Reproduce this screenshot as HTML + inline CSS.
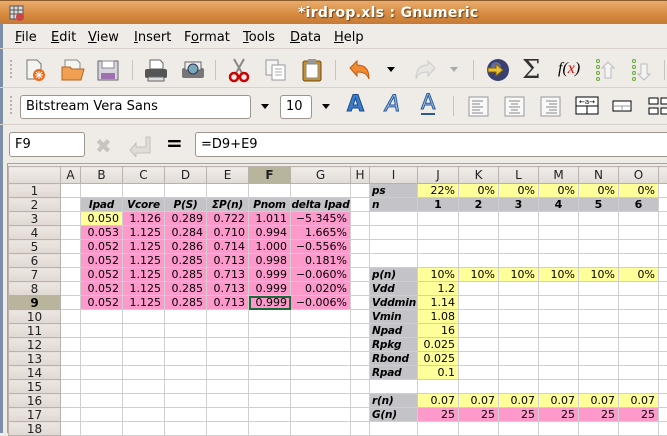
<!DOCTYPE html>
<html><head><meta charset="utf-8"><style>
*{margin:0;padding:0;box-sizing:border-box}
body{width:667px;height:433px;overflow:hidden;background:#efebe7;font-family:"DejaVu Sans","Liberation Sans",sans-serif;position:relative}
.a{position:absolute}
#title{left:0;top:0;width:667px;height:24px;background:linear-gradient(#e9ac6c,#d6893f 60%,#c67a36);border-top:1px solid #8a5a2a}
#title .t{position:absolute;left:298px;top:4px;color:#fff;font-weight:bold;font-size:14px;text-shadow:1px 1px 1px #6a3e10;letter-spacing:0.3px}
#menu{left:0;top:24px;width:667px;height:25px;font-size:13px;color:#000;border-bottom:1px solid #d8d2ca}
#menu span{position:absolute;top:6px}
.tb{left:0;width:667px;border-bottom:1px solid #d8d2ca}
.grip{position:absolute;left:10px;width:4px;border-left:2px dotted #b8b2a8}
.sep{position:absolute;width:1px;background:#c8c2b8}
.box{position:absolute;background:#fff;border:1px solid #9c968c;border-radius:3px;font-size:13px;padding-left:5px}
table{position:absolute;left:8px;top:166px;width:670px;border-collapse:collapse;table-layout:fixed;font-size:11px}
td{height:14px;border:1px solid #cfcfcf;padding:0 3px;text-align:right;white-space:nowrap;overflow:hidden;line-height:12px;background:#fff}
tr.h td{height:17px;background:linear-gradient(#f0ece8,#e2dcd6);border:1px solid #b8b2aa;text-align:center;font-size:12px;color:#222}
td.r{background:linear-gradient(#ece6e2,#e0d8d2);border:1px solid #b8b2aa;text-align:center;font-size:12px;color:#222}
td.sel{background:#b9b49c!important;font-weight:bold;color:#000}
.p{background:#fe99cc}.y{background:#ffff99}.g{background:#c3c3c8;font-weight:bold;font-style:italic;text-align:left;padding:0 1px 0 2px;font-size:10.5px;letter-spacing:-0.2px}
.gc{background:#c3c3c8;font-weight:bold;font-style:italic;text-align:center;padding:0;font-size:10.5px;letter-spacing:-0.2px}
.gb{background:#c3c3c8;font-weight:bold;text-align:center}
</style></head><body>
<div class="a" style="left:0;top:0;width:3px;height:433px;background:#7c8ea8"></div>
<div id="title" class="a"><svg class="a" style="left:9px;top:4px" width="16" height="16"><rect x="1" y="1" width="13" height="13" fill="#ddd" stroke="#555"/><path d="M1 5h13M1 9h13M5 1v13M9 1v13" stroke="#555"/><circle cx="11" cy="12" r="4" fill="#c44"/></svg><span class="t">*irdrop.xls : Gnumeric</span></div>
<div id="menu" class="a">
<span style="left:15px"><u>F</u>ile</span><span style="left:51px"><u>E</u>dit</span><span style="left:88px"><u>V</u>iew</span><span style="left:134px"><u>I</u>nsert</span><span style="left:184px">F<u>o</u>rmat</span><span style="left:243px"><u>T</u>ools</span><span style="left:290px"><u>D</u>ata</span><span style="left:334px"><u>H</u>elp</span></div>
<div class="a tb" style="top:50px;height:38px">
<div class="grip" style="top:10px;height:18px"></div>
<svg class="a" style="left:24px;top:8px" width="24" height="24"><path d="M3 2h10l4 4v15H3z" fill="#f4f4f0" stroke="#777"/><circle cx="15" cy="17" r="6" fill="#ec6a1a"/><path d="M15 13v8M11 17h8M12 14l6 6M18 14l-6 6" stroke="#fff" stroke-width="1"/></svg>
<svg class="a" style="left:60px;top:8px" width="26" height="24"><path d="M5 2h12l3 3v10H5z" fill="#f4f4f0" stroke="#888"/><path d="M2 9h8l2 2h12l-3 11H2z" fill="#f0a050" stroke="#b06820"/></svg>
<svg class="a" style="left:96px;top:8px" width="24" height="24"><rect x="2" y="3" width="20" height="19" fill="#d8d4e0" stroke="#666"/><rect x="6" y="3" width="12" height="7" fill="#fff" stroke="#888"/><rect x="5" y="15" width="14" height="6" fill="#a070b0"/></svg>
<div class="sep" style="left:132px;top:10px;height:20px"></div>
<svg class="a" style="left:143px;top:7px" width="26" height="26"><path d="M7 3h10l3 3v6H7z" fill="#fff" stroke="#666"/><rect x="2" y="12" width="22" height="9" fill="#555" rx="2"/><rect x="5" y="20" width="16" height="4" fill="#ddd" stroke="#666"/></svg>
<svg class="a" style="left:180px;top:7px" width="26" height="26"><rect x="2" y="11" width="22" height="10" fill="#777" rx="2"/><rect x="5" y="5" width="16" height="8" fill="#eee" stroke="#666"/><circle cx="13" cy="12" r="5" fill="#7ab" stroke="#335"/></svg>
<div class="sep" style="left:215px;top:10px;height:20px"></div>
<svg class="a" style="left:227px;top:7px" width="24" height="26"><path d="M7 2l8 14M17 2l-8 14" stroke="#888" stroke-width="2"/><circle cx="7" cy="20" r="4" fill="none" stroke="#c00" stroke-width="2.5"/><circle cx="17" cy="20" r="4" fill="none" stroke="#c00" stroke-width="2.5"/></svg>
<svg class="a" style="left:264px;top:8px" width="24" height="24"><rect x="2" y="2" width="12" height="15" fill="#f4f4f4" stroke="#999"/><rect x="8" y="7" width="13" height="15" fill="#fff" stroke="#999"/><path d="M11 11h7M11 14h7M11 17h7" stroke="#aaa"/></svg>
<svg class="a" style="left:300px;top:7px" width="24" height="26"><rect x="3" y="4" width="18" height="20" fill="#c89030" stroke="#6a4a10" rx="2"/><rect x="6" y="7" width="12" height="14" fill="#fff" stroke="#888"/><rect x="8" y="2" width="8" height="4" fill="#999"/></svg>
<div class="sep" style="left:335px;top:10px;height:20px"></div>
<svg class="a" style="left:347px;top:9px" width="26" height="22"><path d="M3 9l7-7v4c8 0 12 4 12 14c-2-5-5-7-12-7v4z" fill="#f08a30" stroke="#c05a10"/></svg>
<div class="a" style="left:387px;top:17px;border:4px solid transparent;border-top:5px solid #000"></div>
<svg class="a" style="left:412px;top:9px" width="26" height="22"><path d="M23 9l-7-7v4C8 6 4 10 4 20c2-5 5-7 12-7v4z" fill="#e8e6e2" stroke="#ccc"/></svg>
<div class="a" style="left:450px;top:17px;border:4px solid transparent;border-top:5px solid #aaa"></div>
<div class="sep" style="left:473px;top:10px;height:20px"></div>
<svg class="a" style="left:486px;top:8px" width="26" height="26"><circle cx="12" cy="12" r="11" fill="#3a4070"/><circle cx="10" cy="9" r="5" fill="#8090c0" opacity=".6"/><path d="M2 10h8v-4l7 6-7 6v-4H2z" fill="#e8c030" stroke="#806010"/></svg>
<div class="a" style="left:522px;top:5px;font-size:26px;color:#333;font-family:'DejaVu Serif',serif">Σ</div>
<div class="a" style="left:558px;top:10px;font-size:16px;font-style:italic;font-family:'Liberation Serif',serif">f(<span style="color:#d00">x</span>)</div>
<svg class="a" style="left:595px;top:8px" width="22" height="24"><g fill="none" stroke="#6a3"><circle cx="3" cy="3" r="1.5"/><circle cx="3" cy="9" r="1.5"/><circle cx="3" cy="15" r="1.5"/><circle cx="3" cy="21" r="1.5"/></g><path d="M13 4l6 6h-3v10h-6V10H7z" fill="#f4f4f4" stroke="#bbb"/></svg>
<svg class="a" style="left:631px;top:8px" width="22" height="24"><g fill="none" stroke="#6a3"><circle cx="3" cy="3" r="1.5"/><circle cx="3" cy="9" r="1.5"/><circle cx="3" cy="15" r="1.5"/><circle cx="3" cy="21" r="1.5"/></g><path d="M13 22l6-6h-3V6h-6v10H7z" fill="#f4f4f4" stroke="#bbb"/></svg>
<div class="sep" style="left:664px;top:10px;height:20px"></div>
</div>
<div class="a tb" style="top:88px;height:37px">
<div class="grip" style="top:8px;height:18px"></div>
<div class="box" style="left:20px;top:7px;width:231px;height:24px;line-height:22px">Bitstream Vera Sans</div>
<div class="a" style="left:261px;top:16px;border:4px solid transparent;border-top:5px solid #000"></div>
<div class="box" style="left:280px;top:7px;width:32px;height:24px;line-height:22px">10</div>
<div class="a" style="left:322px;top:16px;border:4px solid transparent;border-top:5px solid #000"></div>
<div class="a" style="left:347px;top:4px;font-size:22px;font-weight:bold;color:#3a7cc8;-webkit-text-stroke:1px #1a4a8a">A</div>
<div class="a" style="left:385px;top:4px;font-size:22px;font-style:italic;color:#9cc0ea;-webkit-text-stroke:1px #2a5a9a">A</div>
<div class="a" style="left:421px;top:3px;font-size:21px;color:#9cc0ea;-webkit-text-stroke:1px #2a5a9a;border-bottom:2px solid #2a5a9a;line-height:22px">A</div>
<div class="sep" style="left:453px;top:8px;height:20px"></div>
<svg class="a" style="left:468px;top:8px" width="22" height="22"><rect x="1" y="1" width="19" height="19" fill="#f8f8f8" stroke="#999"/><path d="M4 5h11M4 8h8M4 11h11M4 14h8M4 17h11" stroke="#888"/></svg>
<svg class="a" style="left:504px;top:8px" width="22" height="22"><rect x="1" y="1" width="19" height="19" fill="#f8f8f8" stroke="#999"/><path d="M5 5h11M7 8h7M5 11h11M7 14h7M5 17h11" stroke="#888"/></svg>
<svg class="a" style="left:540px;top:8px" width="22" height="22"><rect x="1" y="1" width="19" height="19" fill="#f8f8f8" stroke="#999"/><path d="M6 5h11M9 8h8M6 11h11M9 14h8M6 17h11" stroke="#888"/></svg>
<svg class="a" style="left:575px;top:8px" width="24" height="20"><rect x="1" y="1" width="22" height="17" fill="#fff" stroke="#000"/><path d="M1 10h22M12 10v8" stroke="#000"/><text x="12" y="8" font-size="7" text-anchor="middle" font-family="DejaVu Sans">←a→</text></svg>
<svg class="a" style="left:612px;top:12px" width="20" height="12"><rect x="1" y="1" width="18" height="10" fill="#fff" stroke="#000"/><path d="M10 6v5M1 6h18" stroke="#999"/></svg>
<svg class="a" style="left:648px;top:8px" width="19" height="20"><rect x="1" y="2" width="9" height="6" fill="#fff" stroke="#000"/><rect x="1" y="12" width="9" height="6" fill="#fff" stroke="#000"/><rect x="13" y="2" width="9" height="6" fill="#fff" stroke="#000"/><rect x="13" y="12" width="9" height="6" fill="#fff" stroke="#000"/></svg>
</div>
<div class="a" style="left:0;top:125px;width:667px;height:36px">
<div class="box" style="left:9px;top:7px;width:76px;height:25px;line-height:23px">F9</div>
<div class="a" style="left:95px;top:9px;font-size:20px;color:#c8c4c0;font-weight:bold">✖</div>
<svg class="a" style="left:128px;top:10px" width="24" height="22"><path d="M18 2v10H8v-4l-6 7 6 7v-4h14V2z" fill="#e0dcd8" stroke="#c4c0bc"/></svg>
<div class="a" style="left:166px;top:6px;font-size:20px;font-weight:bold">=</div>
<div class="box" style="left:195px;top:7px;width:480px;height:25px;line-height:23px">=D9+E9</div>
</div>
<div class="a" style="left:7px;top:163px;width:660px;height:270px;border-top:1px solid #a8a298;border-left:1px solid #a8a298"></div>
<table>
<colgroup><col style="width:52px"><col style="width:20px"><col style="width:42px"><col style="width:42px"><col style="width:42px"><col style="width:42px"><col style="width:42px"><col style="width:60px"><col style="width:19px"><col style="width:48px"><col style="width:41px"><col style="width:40px"><col style="width:40px"><col style="width:40px"><col style="width:40px"><col style="width:40px"><col style="width:20px"></colgroup>
<tr class="h"><td></td><td>A</td><td>B</td><td>C</td><td>D</td><td>E</td><td class="sel">F</td><td>G</td><td>H</td><td>I</td><td>J</td><td>K</td><td>L</td><td>M</td><td>N</td><td>O</td><td></td></tr>
<tr><td class="r">1</td><td></td><td></td><td></td><td></td><td></td><td></td><td></td><td></td><td class="g">ps</td><td class="y">22%</td><td class="y">0%</td><td class="y">0%</td><td class="y">0%</td><td class="y">0%</td><td class="y">0%</td><td></td></tr>
<tr><td class="r">2</td><td></td><td class="gc">Ipad</td><td class="gc">Vcore</td><td class="gc">P(S)</td><td class="gc">ΣP(n)</td><td class="gc">Pnom</td><td class="gc">delta Ipad</td><td></td><td class="g">n</td><td class="gb">1</td><td class="gb">2</td><td class="gb">3</td><td class="gb">4</td><td class="gb">5</td><td class="gb">6</td><td></td></tr>
<tr><td class="r">3</td><td></td><td class="y">0.050</td><td class="p">1.126</td><td class="p">0.289</td><td class="p">0.722</td><td class="p">1.011</td><td class="p">−5.345%</td><td></td><td></td><td></td><td></td><td></td><td></td><td></td><td></td><td></td></tr>
<tr><td class="r">4</td><td></td><td class="p">0.053</td><td class="p">1.125</td><td class="p">0.284</td><td class="p">0.710</td><td class="p">0.994</td><td class="p">1.665%</td><td></td><td></td><td></td><td></td><td></td><td></td><td></td><td></td><td></td></tr>
<tr><td class="r">5</td><td></td><td class="p">0.052</td><td class="p">1.125</td><td class="p">0.286</td><td class="p">0.714</td><td class="p">1.000</td><td class="p">−0.556%</td><td></td><td></td><td></td><td></td><td></td><td></td><td></td><td></td><td></td></tr>
<tr><td class="r">6</td><td></td><td class="p">0.052</td><td class="p">1.125</td><td class="p">0.285</td><td class="p">0.713</td><td class="p">0.998</td><td class="p">0.181%</td><td></td><td></td><td></td><td></td><td></td><td></td><td></td><td></td><td></td></tr>
<tr><td class="r">7</td><td></td><td class="p">0.052</td><td class="p">1.125</td><td class="p">0.285</td><td class="p">0.713</td><td class="p">0.999</td><td class="p">−0.060%</td><td></td><td class="g">p(n)</td><td class="y">10%</td><td class="y">10%</td><td class="y">10%</td><td class="y">10%</td><td class="y">10%</td><td class="y">0%</td><td></td></tr>
<tr><td class="r">8</td><td></td><td class="p">0.052</td><td class="p">1.125</td><td class="p">0.285</td><td class="p">0.713</td><td class="p">0.999</td><td class="p">0.020%</td><td></td><td class="g">Vdd</td><td class="y">1.2</td><td></td><td></td><td></td><td></td><td></td><td></td></tr>
<tr><td class="r sel">9</td><td></td><td class="p">0.052</td><td class="p">1.125</td><td class="p">0.285</td><td class="p">0.713</td><td class="p" style="outline:2px solid #1a6a3a;outline-offset:-2px">0.999</td><td class="p">−0.006%</td><td></td><td class="g">Vddmin</td><td class="y">1.14</td><td></td><td></td><td></td><td></td><td></td><td></td></tr>
<tr><td class="r">10</td><td></td><td></td><td></td><td></td><td></td><td></td><td></td><td></td><td class="g">Vmin</td><td class="y">1.08</td><td></td><td></td><td></td><td></td><td></td><td></td></tr>
<tr><td class="r">11</td><td></td><td></td><td></td><td></td><td></td><td></td><td></td><td></td><td class="g">Npad</td><td class="y">16</td><td></td><td></td><td></td><td></td><td></td><td></td></tr>
<tr><td class="r">12</td><td></td><td></td><td></td><td></td><td></td><td></td><td></td><td></td><td class="g">Rpkg</td><td class="y">0.025</td><td></td><td></td><td></td><td></td><td></td><td></td></tr>
<tr><td class="r">13</td><td></td><td></td><td></td><td></td><td></td><td></td><td></td><td></td><td class="g">Rbond</td><td class="y">0.025</td><td></td><td></td><td></td><td></td><td></td><td></td></tr>
<tr><td class="r">14</td><td></td><td></td><td></td><td></td><td></td><td></td><td></td><td></td><td class="g">Rpad</td><td class="y">0.1</td><td></td><td></td><td></td><td></td><td></td><td></td></tr>
<tr><td class="r">15</td><td></td><td></td><td></td><td></td><td></td><td></td><td></td><td></td><td></td><td></td><td></td><td></td><td></td><td></td><td></td><td></td></tr>
<tr><td class="r">16</td><td></td><td></td><td></td><td></td><td></td><td></td><td></td><td></td><td class="g">r(n)</td><td class="y">0.07</td><td class="y">0.07</td><td class="y">0.07</td><td class="y">0.07</td><td class="y">0.07</td><td class="y">0.07</td><td></td></tr>
<tr><td class="r">17</td><td></td><td></td><td></td><td></td><td></td><td></td><td></td><td></td><td class="g">G(n)</td><td class="p">25</td><td class="p">25</td><td class="p">25</td><td class="p">25</td><td class="p">25</td><td class="p">25</td><td></td></tr>
<tr><td class="r">18</td><td></td><td></td><td></td><td></td><td></td><td></td><td></td><td></td><td></td><td></td><td></td><td></td><td></td><td></td><td></td><td></td></tr>
</table>
</body></html>
